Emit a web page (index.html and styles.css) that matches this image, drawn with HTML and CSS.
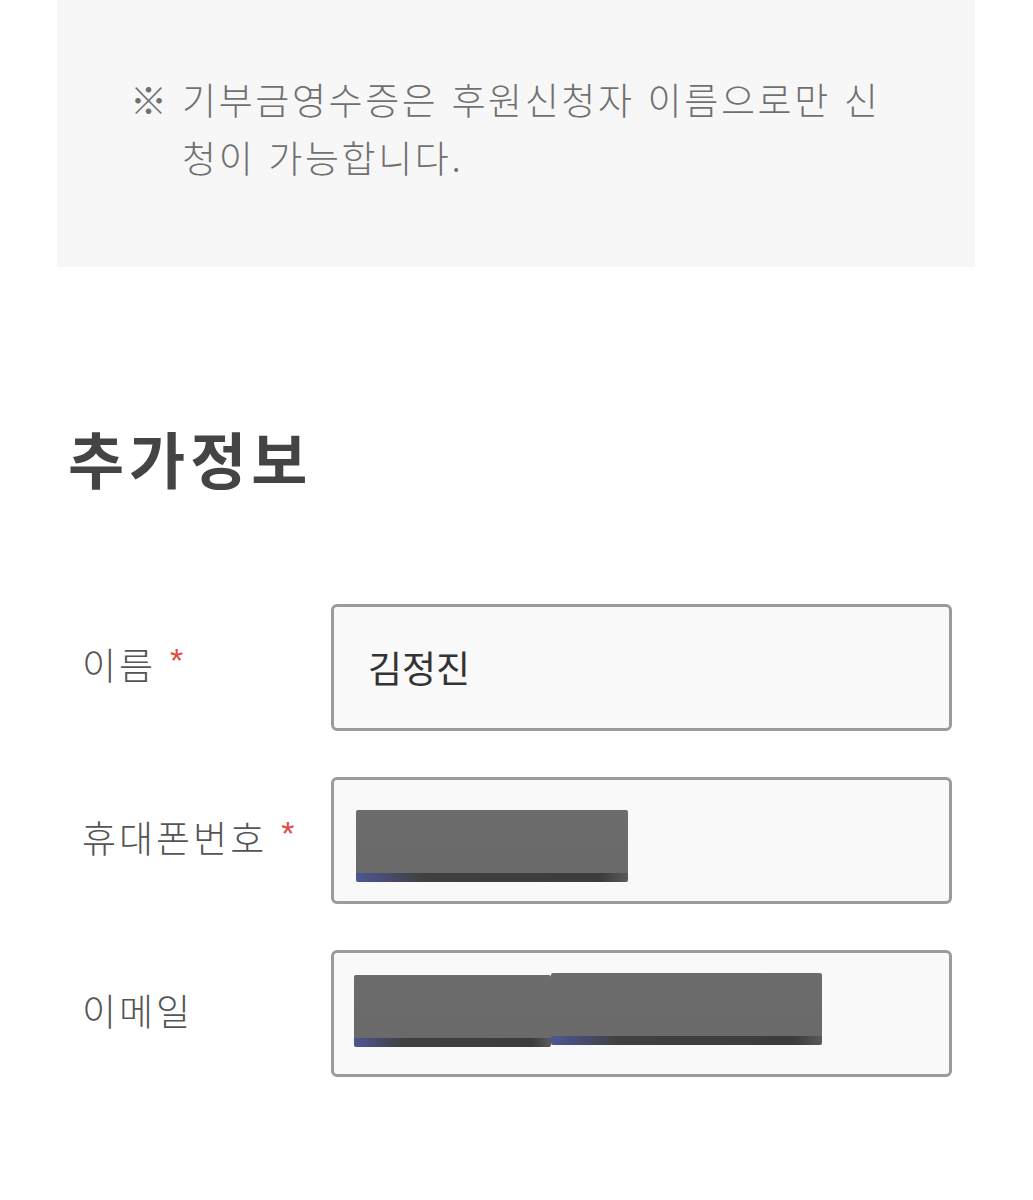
FILE: index.html
```html
<!DOCTYPE html>
<html lang="ko">
<head>
    <meta charset="UTF-8">
    <meta name="viewport" content="width=device-width, initial-scale=1.0">
    <title>추가정보</title>
    <link rel="stylesheet" href="styles.css">
</head>
<body>

    <div class="notice">
        <span class="notice-mark">※</span>
        <p class="notice-text">기부금영수증은 후원신청자 이름으로만 신청이 가능합니다.</p>
    </div>

    <h2 class="section-title">추가정보</h2>

    <div class="form">
        <div class="form-row">
            <label class="form-label">이름<span class="required">*</span></label>
            <div class="field">
                <span class="field-value">김정진</span>
            </div>
        </div>
        <div class="form-row">
            <label class="form-label">휴대폰번호<span class="required">*</span></label>
            <div class="field">
                <div class="redact redact-phone"></div>
            </div>
        </div>
        <div class="form-row">
            <label class="form-label">이메일</label>
            <div class="field">
                <div class="redact redact-mail-a"></div>
                <div class="redact redact-mail-b"></div>
            </div>
        </div>
    </div>

</body>
</html>
```

FILE: styles.css
```css
body {
    margin: 0;
    background: #fff;
    font-family: "Noto Sans CJK KR", "Noto Sans", sans-serif;
    color: #444;
}
.notice {
    display: flex;
    margin: 0 58px 0 57px;
    height: 267px;
    box-sizing: border-box;
    padding: 70px 80px 0 73px;
    background-color: #f7f7f7;
    color: #707070;
    font-size: 37px;
    font-weight: 300;
    line-height: 58px;
}
.notice-mark {
    flex: 0 0 52px;
}
.notice-text {
    margin: 0;
    letter-spacing: 2.6px;
}
.section-title {
    margin: 154px 0 0 68px;
    font-size: 61px;
    font-weight: 700;
    line-height: 73px;
    letter-spacing: 5px;
    color: #444;
}
.form {
    margin-top: 110px;
    padding: 0 81px 0 82px;
}
.form-row {
    display: flex;
    align-items: center;
    margin-bottom: 46px;
}
.form-label {
    flex: 0 0 249px;
    padding-bottom: 8px;
    font-size: 37px;
    font-weight: 300;
    letter-spacing: 3px;
    color: #555;
}
.required {
    margin-left: 14px;
    font-family: "Liberation Sans", sans-serif;
    font-size: 34px;
    color: #e04a45;
    vertical-align: 8px;
}
.field {
    display: flex;
    align-items: center;
    flex: 1;
    height: 127px;
    box-sizing: border-box;
    padding: 0 22px;
    border: 3px solid #9b9b9b;
    border-radius: 6px;
    background-color: #f9f9f9;
}
.field-value {
    padding-left: 12px;
    padding-bottom: 2px;
    font-size: 37px;
    color: #333;
}
.redact {
    height: 72px;
    border-radius: 2px;
    background:
        linear-gradient(#6c6c6c, #6a6a6a) top / 100% 63px no-repeat,
        linear-gradient(to right, #4d5694, #404040 25%, #3c3c3c 90%, #5a5a5a);
}
.redact-phone {
    width: 272px;
    margin-top: 10px;
}
.redact-mail-a {
    width: 197px;
    margin-left: -2px;
    margin-top: -6px;
}
.redact-mail-b {
    width: 271px;
    margin-top: -10px;
}
```
